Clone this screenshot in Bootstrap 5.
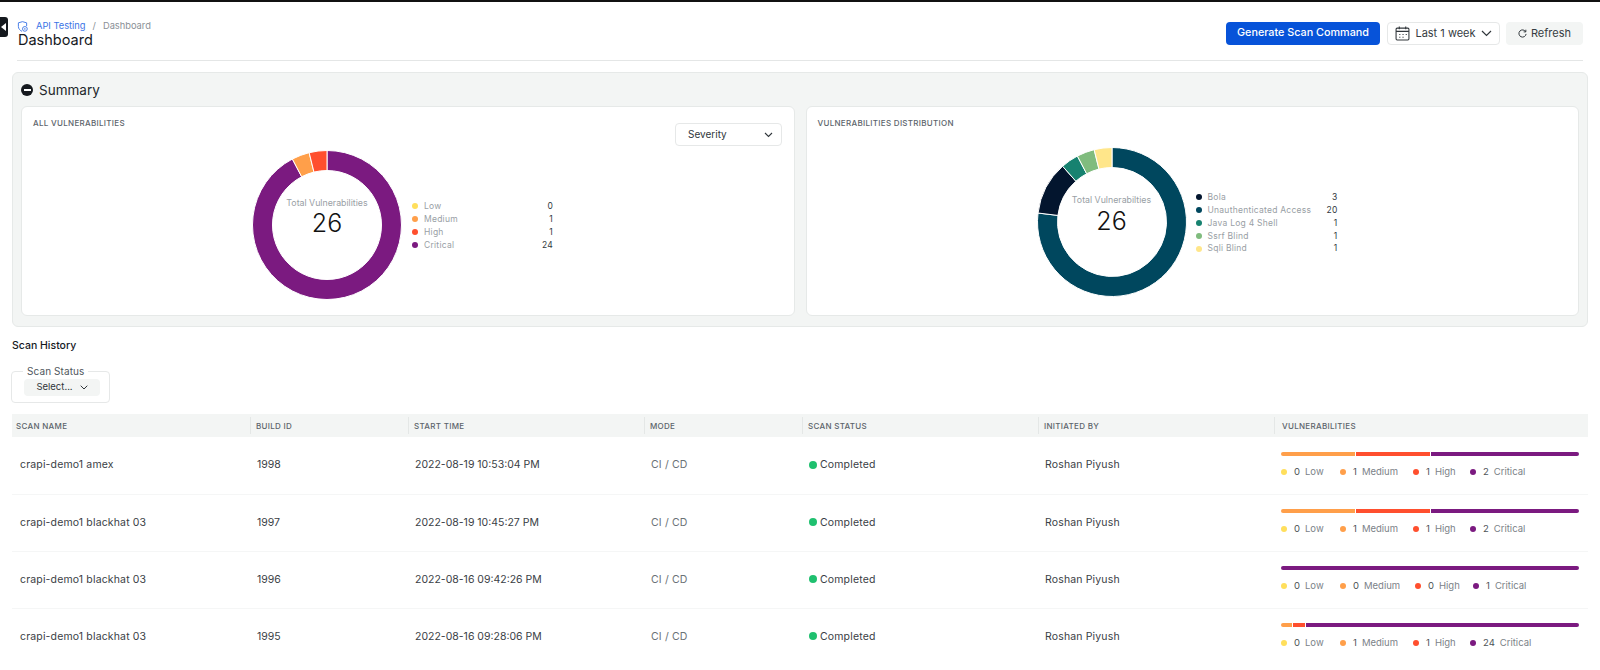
<!DOCTYPE html>
<html lang="en"><head><meta charset="utf-8"><title>Dashboard</title>
<link rel="stylesheet" href="https://cdn.jsdelivr.net/npm/bootstrap@5.3.0/dist/css/bootstrap.min.css">
<style>
html,body{height:670px;overflow:hidden}
body{font-family:Inter,"Liberation Sans",sans-serif;background:#fff;color:#1f2328;font-size:11px;border-top:2px solid #111;position:relative}
.back-tab{position:absolute;left:0;top:15px;width:8px;height:20px;background:#15191e;border-radius:0 3px 3px 0;display:flex;align-items:center;justify-content:center}
.topbar{margin:0 17px;height:59px;border-bottom:1px solid #e4e6e6;display:flex;justify-content:space-between;padding-top:18px}
.crumbs{font-size:9.3px;line-height:12px;display:flex;align-items:center;color:#8a9096}
.crumbs a{color:#3b74e6;text-decoration:none;margin-left:8px}
.crumbs .sep{margin:0 7px}
.page-title{font-size:14.5px;line-height:18px;margin:-1px 0 0;font-weight:400;color:#15191e;padding-left:1px}
.acts{display:flex;gap:7px;align-items:flex-start;margin-top:2px}
.btn-gen{background:#0753d9;color:#fff;font-size:10.8px;font-weight:500;height:23px;width:154px;padding:0;border:0;border-radius:4px}
.btn-gen:hover{background:#0753d9;color:#fff}
.btn-range{background:#fff;border:1px solid #e6e8e8;color:#363c42;font-size:11px;height:23px;width:113px;padding:0;border-radius:4px;display:flex;align-items:center;justify-content:center;gap:5px;margin-right:-1px}
.btn-ref{background:#f3f5f4;border:0;color:#363c42;font-size:11px;height:23px;width:77px;padding:0;border-radius:4px;display:flex;align-items:center;justify-content:center;gap:4px}
.panel-sum{margin:11px 12px 0;height:255px;background:#f3f5f4;border:1px solid #e6e9e8;border-radius:6px;padding:0 8px}
.sum-head{height:33px;display:flex;align-items:center;gap:6px;font-size:13.5px;color:#22272b;padding-top:1px}
.sum-ico{width:12px;height:12px;background:#15191e;border-radius:50%;display:flex;align-items:center;justify-content:center}
.sum-ico i{display:block;width:7px;height:2px;background:#fff}
.sum-cards{display:flex;gap:11px}
.chart-card{flex:1 1 0;height:210px;background:#fff;border:1px solid #e6e9e8;border-radius:6px;position:relative}
.chart-title{position:absolute;left:11px;top:10px;font-size:8px;font-weight:500;color:#5c646b;letter-spacing:.3px}
.sev{position:absolute;left:653px;top:16px;width:107px;height:23px;background:#fff;border:1px solid #e6e8e8;border-radius:4px;font-size:10px;display:flex;align-items:center;justify-content:space-between;padding:0 8px 0 12px;color:#30363b}
.donut{position:absolute;width:150px;height:150px}
.donut-txt{position:absolute;text-align:center;left:230px;width:150px}
.dt1{font-size:8.8px;color:#99a0a5;line-height:10px}
.dt2{font-size:25px;color:#111;line-height:28px;font-weight:300}
.leg{position:absolute;font-size:8.5px;color:#99a0a5;line-height:12.85px;letter-spacing:.25px}
.leg>div{display:flex;align-items:center}
.leg i{width:6px;height:6px;border-radius:50%;margin-right:6px;flex:none}
.leg b{margin-left:auto;font-weight:400;color:#33393e}
.scan-h{font-size:10.5px;font-weight:500;margin:12px 0 0 12px;line-height:14px;color:#15191e}
.filter-box{margin:18px 0 0 11px;width:99px;height:32px;border:1px solid #e6e8e8;border-radius:4px;position:relative}
.filter-box span.cap{position:absolute;left:11px;top:-7px;background:#fff;padding:0 4px;font-size:10px;line-height:12px;color:#50575d;letter-spacing:.1px}
.filter-pill{position:absolute;left:12px;top:7px;width:76px;height:17px;background:#f3f5f4;border-radius:4px;font-size:9.5px;display:flex;align-items:center;justify-content:center;gap:7px;color:#30363b}
.scan-wrap{margin:11px 12px 0}
.scan-tbl{table-layout:fixed;width:1576px;margin:0;border-collapse:collapse;font-size:10.5px}
.scan-tbl th{background:#f3f5f4;height:23px;padding:0 0 0 6px;font-size:8px;font-weight:500;color:#5c646b;letter-spacing:.3px;vertical-align:middle;border:0;position:relative}
.scan-tbl th:first-child{padding-left:4px}
.scan-tbl th:nth-child(7){padding-left:8px}
.scan-tbl th+th::before{content:"";position:absolute;left:0;top:3px;bottom:3px;width:1px;background:#e4e7e6}
.scan-tbl td{height:57px;padding:0 0 0 7px;vertical-align:middle;border:0;border-bottom:1px solid #f5f6f6;color:#3a4045;box-shadow:none;letter-spacing:.15px}
.scan-tbl td:first-child{padding-left:8px}
.scan-tbl tr:last-child td{border-bottom:0}
.scan-tbl td.num-cell{letter-spacing:0}
.m-txt{color:#6a7176!important}
.st-dot{display:inline-block;width:8px;height:8px;border-radius:50%;background:#1fc06f;margin-right:3px;vertical-align:-.5px}
.vbar{display:flex;gap:1px;height:4px;width:298px;border-radius:2px;overflow:hidden;margin-top:-1px}
.vbar i{display:block;height:100%}
.vleg{display:flex;margin-top:10px;font-size:9.5px;line-height:12px;color:#7b8288;width:298px;letter-spacing:0}
.vleg span{display:flex;align-items:center;white-space:nowrap}
.vleg i{width:6px;height:6px;border-radius:50%;margin-right:7px;flex:none}
.vleg b{font-weight:400;color:#4d5358;margin-right:5px}
.c-l{background:#ffdf5c}.c-m{background:#ff9f4a}.c-h{background:#ff4f2e}.c-c{background:#7b1a80}
</style></head><body>
<div class="back-tab"><svg width="6" height="8" viewBox="0 0 6 8"><path d="M5 0v8L0 4z" fill="#fff"/></svg></div>
<div class="topbar">
 <div>
  <div class="crumbs">
   <svg width="11" height="11" viewBox="0 0 12 12" fill="none" stroke="#3b74e6" stroke-width="1"><path d="M6 .7 10.5 2v3.5M6 .7 1.5 2v4c0 2.6 2 4.4 4 5.3"/><circle cx="8.6" cy="8.6" r="2.6"/><path d="M8.6 7.6v2"/></svg>
   <a href="#">API Testing</a><span class="sep">/</span><span>Dashboard</span>
  </div>
  <h1 class="page-title">Dashboard</h1>
 </div>
 <div class="acts">
  <button class="btn btn-gen">Generate Scan Command</button>
  <button class="btn btn-range"><svg width="15" height="15" viewBox="0 0 14 14" fill="none" stroke="#30363b"><rect x="1" y="2" width="12" height="11" rx="1"/><path d="M1 5h12M4 .5v2.5M10 .5v2.5"/><path d="M4 8h1M7 8h1M10 8h1M4 10.5h1M7 10.5h1" stroke-width="1"/></svg><span>Last 1 week</span><svg width="11" height="7" viewBox="0 0 11 7" fill="none" stroke="#30363b" stroke-width="1.2"><path d="m1 1 4.5 4.5L10 1"/></svg></button>
  <button class="btn btn-ref"><svg width="9" height="9" viewBox="0 0 10 10" fill="none" stroke="#30363b" stroke-width="1.1"><path d="M8.5 3A4 4 0 1 0 9 5.5"/><path d="M8.7 .8v2.4H6.3"/></svg><span>Refresh</span></button>
 </div>
</div>
<section class="panel-sum">
 <div class="sum-head"><div class="sum-ico"><i></i></div><span>Summary</span></div>
 <div class="sum-cards">
  <div class="chart-card">
   <div class="chart-title">ALL VULNERABILITIES</div>
   <div class="sev"><span>Severity</span><svg width="9" height="6" viewBox="0 0 9 6" fill="none" stroke="#30363b" stroke-width="1.1"><path d="m1 1 3.5 3.5L8 1"/></svg></div>
   <svg id="d1" class="donut" viewBox="0 0 150 150" style="left:230px;top:43px"></svg>
   <div class="donut-txt dt1" style="top:91px">Total Vulnerabilities</div>
   <div class="donut-txt dt2" style="top:102px">26</div>
   <div class="leg" style="left:390px;top:93px;width:141px">
    <div><i class="c-l"></i>Low<b>0</b></div><div><i class="c-m"></i>Medium<b>1</b></div><div><i class="c-h"></i>High<b>1</b></div><div><i class="c-c"></i>Critical<b>24</b></div>
   </div>
  </div>
  <div class="chart-card">
   <div class="chart-title">VULNERABILITIES DISTRIBUTION</div>
   <svg id="d2" class="donut" viewBox="0 0 150 150" style="left:230px;top:40px"></svg>
   <div class="donut-txt dt1" style="top:88px">Total Vulnerabilties</div>
   <div class="donut-txt dt2" style="top:100px">26</div>
   <div class="leg" style="left:389px;top:84px;width:142px">
    <div><i style="background:#03152e"></i>Bola<b>3</b></div><div><i style="background:#00475e"></i>Unauthenticated Access<b>20</b></div><div><i style="background:#178270"></i>Java Log 4 Shell<b>1</b></div><div><i style="background:#80bc7e"></i>Ssrf Blind<b>1</b></div><div><i style="background:#ffe68a"></i>Sqli Blind<b>1</b></div>
   </div>
  </div>
 </div>
</section>
<div class="scan-h">Scan History</div>
<div class="filter-box"><span class="cap">Scan Status</span><div class="filter-pill"><span>Select...</span><svg width="8" height="5" viewBox="0 0 8 5" fill="none" stroke="#30363b" stroke-width="1"><path d="m.7.7 3.3 3.3L7.3.7"/></svg></div></div>
<div class="scan-wrap">
<table class="table scan-tbl">
 <colgroup><col style="width:238px"><col style="width:158px"><col style="width:236px"><col style="width:158px"><col style="width:236px"><col style="width:236px"><col></colgroup>
 <thead><tr><th>SCAN NAME</th><th>BUILD ID</th><th>START TIME</th><th>MODE</th><th>SCAN STATUS</th><th>INITIATED BY</th><th>VULNERABILITIES</th></tr></thead>
 <tbody id="rows"></tbody>
</table>
</div>
<script src="https://cdn.jsdelivr.net/npm/bootstrap@5.3.0/dist/js/bootstrap.bundle.min.js"></script>
<script>
function donut(id,segs,total,rO,rI){
 var s=document.getElementById(id),a=0,h='',c=75;
 segs.forEach(function(g){
  var b=a+g[0]/total*2*Math.PI,p=function(r,t){return (c+r*Math.sin(t)).toFixed(2)+' '+(c-r*Math.cos(t)).toFixed(2)};
  var lg=(b-a)>Math.PI?1:0;
  h+='<path d="M'+p(rO,a)+'A'+rO+' '+rO+' 0 '+lg+' 1 '+p(rO,b)+'L'+p(rI,b)+'A'+rI+' '+rI+' 0 '+lg+' 0 '+p(rI,a)+'Z" fill="'+g[1]+'" stroke="#fff" stroke-width="1"/>';
  a=b;
 });
 s.innerHTML=h;
}
donut('d1',[[24,'#7b1a80'],[1,'#ff9f4a'],[1,'#ff4f2e']],26,74.5,54.5);
donut('d2',[[20,'#00475e'],[3,'#03152e'],[1,'#178270'],[1,'#80bc7e'],[1,'#ffe68a']],26,74.5,54.5);
var data=[
 ['crapi-demo1 amex','1998','2022-08-19 10:53:04 PM',[0,1,1,2],[59,73,57,80]],
 ['crapi-demo1 blackhat 03','1997','2022-08-19 10:45:27 PM',[0,1,1,2],[59,73,57,80]],
 ['crapi-demo1 blackhat 03','1996','2022-08-16 09:42:26 PM',[0,0,0,1],[59,75,58,80]],
 ['crapi-demo1 blackhat 03','1995','2022-08-16 09:28:06 PM',[0,1,1,24],[59,73,57,80]]
];
var names=['Low','Medium','High','Critical'],cls=['c-l','c-m','c-h','c-c'];
document.getElementById('rows').innerHTML=data.map(function(d){
 var bar='';[1,2,3].forEach(function(i){if(d[3][i]>0){bar+='<i class="'+cls[i]+'" style="flex:'+d[3][i]+' 1 0"></i>'}});
 var leg=names.map(function(n,i){return '<span style="width:'+d[4][i]+'px"><i class="'+cls[i]+'"></i><b>'+d[3][i]+'</b>'+n+'</span>'}).join('');
 return '<tr><td>'+d[0]+'</td><td class="num-cell">'+d[1]+'</td><td class="num-cell">'+d[2]+'</td><td class="m-txt">CI / CD</td><td><span class="st-dot"></span>Completed</td><td>Roshan Piyush</td><td><div class="vbar">'+bar+'</div><div class="vleg">'+leg+'</div></td></tr>';
}).join('');
</script>
</body></html>
